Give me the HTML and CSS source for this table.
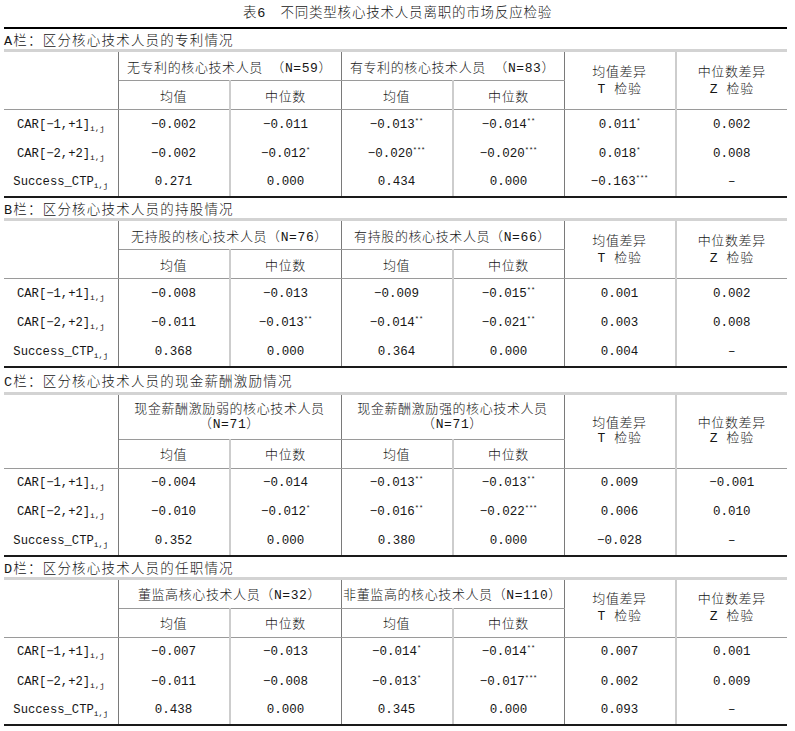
FILE: index.html
```html
<!DOCTYPE html>
<html lang="zh-CN">
<head>
<meta charset="utf-8">
<title>表6 不同类型核心技术人员离职的市场反应检验</title>
<link rel="stylesheet" href="styles.css">
</head>
<body>
<div class="title">表6　不同类型核心技术人员离职的市场反应检验</div>
<table class="tbl">
  <colgroup>
    <col class="c-label"><col class="c-num"><col class="c-num"><col class="c-num"><col class="c-num"><col class="c-num"><col class="c-num">
  </colgroup>

  <tbody class="sec">
    <tr class="cap"><td colspan="7">A栏：区分核心技术人员的专利情况</td></tr>
    <tr class="h1">
      <td rowspan="2" class="vd hb"></td>
      <td colspan="2" class="vd hb">无专利的核心技术人员 （N=59）</td>
      <td colspan="2" class="vd hb">有专利的核心技术人员 （N=83）</td>
      <td rowspan="2" class="vl hb two">均值差异<br>T 检验</td>
      <td rowspan="2" class="hb two">中位数差异<br>Z 检验</td>
    </tr>
    <tr class="h2">
      <td class="vl hb">均值</td><td class="vd hb">中位数</td><td class="vl hb">均值</td><td class="vd hb">中位数</td>
    </tr>
    <tr class="row">
      <td class="vd lab">CAR[−1,+1]<sub>i,j</sub></td>
      <td class="vl">−0.002</td><td class="vd">−0.011</td><td class="vl">−0.013<sup>**</sup></td><td class="vd">−0.014<sup>**</sup></td><td class="vl">0.011<sup>*</sup></td><td>0.002</td>
    </tr>
    <tr class="row">
      <td class="vd lab">CAR[−2,+2]<sub>i,j</sub></td>
      <td class="vl">−0.002</td><td class="vd">−0.012<sup>*</sup></td><td class="vl">−0.020<sup>***</sup></td><td class="vd">−0.020<sup>***</sup></td><td class="vl">0.018<sup>*</sup></td><td>0.008</td>
    </tr>
    <tr class="row last">
      <td class="vd lab">Success_CTP<sub>i,j</sub></td>
      <td class="vl">0.271</td><td class="vd">0.000</td><td class="vl">0.434</td><td class="vd">0.000</td><td class="vl">−0.163<sup>***</sup></td><td>–</td>
    </tr>
  </tbody>

  <tbody class="sec">
    <tr class="cap"><td colspan="7">B栏：区分核心技术人员的持股情况</td></tr>
    <tr class="h1">
      <td rowspan="2" class="vd hb"></td>
      <td colspan="2" class="vd hb">无持股的核心技术人员（N=76）</td>
      <td colspan="2" class="vd hb">有持股的核心技术人员（N=66）</td>
      <td rowspan="2" class="vl hb two">均值差异<br>T 检验</td>
      <td rowspan="2" class="hb two">中位数差异<br>Z 检验</td>
    </tr>
    <tr class="h2">
      <td class="vl hb">均值</td><td class="vd hb">中位数</td><td class="vl hb">均值</td><td class="vd hb">中位数</td>
    </tr>
    <tr class="row">
      <td class="vd lab">CAR[−1,+1]<sub>i,j</sub></td>
      <td class="vl">−0.008</td><td class="vd">−0.013</td><td class="vl">−0.009</td><td class="vd">−0.015<sup>**</sup></td><td class="vl">0.001</td><td>0.002</td>
    </tr>
    <tr class="row">
      <td class="vd lab">CAR[−2,+2]<sub>i,j</sub></td>
      <td class="vl">−0.011</td><td class="vd">−0.013<sup>**</sup></td><td class="vl">−0.014<sup>**</sup></td><td class="vd">−0.021<sup>**</sup></td><td class="vl">0.003</td><td>0.008</td>
    </tr>
    <tr class="row last">
      <td class="vd lab">Success_CTP<sub>i,j</sub></td>
      <td class="vl">0.368</td><td class="vd">0.000</td><td class="vl">0.364</td><td class="vd">0.000</td><td class="vl">0.004</td><td>–</td>
    </tr>
  </tbody>

  <tbody class="sec">
    <tr class="cap cap-tall"><td colspan="7">C栏：区分核心技术人员的现金薪酬激励情况</td></tr>
    <tr class="h1 tall">
      <td rowspan="2" class="vd hb"></td>
      <td colspan="2" class="vd hb two">现金薪酬激励弱的核心技术人员<br>（N=71）</td>
      <td colspan="2" class="vd hb two">现金薪酬激励强的核心技术人员<br>（N=71）</td>
      <td rowspan="2" class="vl hb two">均值差异<br>T 检验</td>
      <td rowspan="2" class="hb two">中位数差异<br>Z 检验</td>
    </tr>
    <tr class="h2">
      <td class="vl hb">均值</td><td class="vd hb">中位数</td><td class="vl hb">均值</td><td class="vd hb">中位数</td>
    </tr>
    <tr class="row">
      <td class="vd lab">CAR[−1,+1]<sub>i,j</sub></td>
      <td class="vl">−0.004</td><td class="vd">−0.014</td><td class="vl">−0.013<sup>**</sup></td><td class="vd">−0.013<sup>**</sup></td><td class="vl">0.009</td><td>−0.001</td>
    </tr>
    <tr class="row">
      <td class="vd lab">CAR[−2,+2]<sub>i,j</sub></td>
      <td class="vl">−0.010</td><td class="vd">−0.012<sup>*</sup></td><td class="vl">−0.016<sup>**</sup></td><td class="vd">−0.022<sup>***</sup></td><td class="vl">0.006</td><td>0.010</td>
    </tr>
    <tr class="row last">
      <td class="vd lab">Success_CTP<sub>i,j</sub></td>
      <td class="vl">0.352</td><td class="vd">0.000</td><td class="vl">0.380</td><td class="vd">0.000</td><td class="vl">−0.028</td><td>–</td>
    </tr>
  </tbody>

  <tbody class="sec">
    <tr class="cap"><td colspan="7">D栏：区分核心技术人员的任职情况</td></tr>
    <tr class="h1">
      <td rowspan="2" class="vd hb"></td>
      <td colspan="2" class="vd hb">董监高核心技术人员（N=32）</td>
      <td colspan="2" class="vd hb">非董监高的核心技术人员（N=110）</td>
      <td rowspan="2" class="vl hb two">均值差异<br>T 检验</td>
      <td rowspan="2" class="hb two">中位数差异<br>Z 检验</td>
    </tr>
    <tr class="h2">
      <td class="vl hb">均值</td><td class="vd hb">中位数</td><td class="vl hb">均值</td><td class="vd hb">中位数</td>
    </tr>
    <tr class="row">
      <td class="vd lab">CAR[−1,+1]<sub>i,j</sub></td>
      <td class="vl">−0.007</td><td class="vd">−0.013</td><td class="vl">−0.014<sup>*</sup></td><td class="vd">−0.014<sup>**</sup></td><td class="vl">0.007</td><td>0.001</td>
    </tr>
    <tr class="row">
      <td class="vd lab">CAR[−2,+2]<sub>i,j</sub></td>
      <td class="vl">−0.011</td><td class="vd">−0.008</td><td class="vl">−0.013<sup>*</sup></td><td class="vd">−0.017<sup>***</sup></td><td class="vl">0.002</td><td>0.009</td>
    </tr>
    <tr class="row last">
      <td class="vd lab">Success_CTP<sub>i,j</sub></td>
      <td class="vl">0.438</td><td class="vd">0.000</td><td class="vl">0.345</td><td class="vd">0.000</td><td class="vl">0.093</td><td>–</td>
    </tr>
  </tbody>
</table>
</body>
</html>
```

FILE: styles.css
```css
html, body {
  margin: 0;
  padding: 0;
  background: #ffffff;
}
body {
  color: #161616;
  font-family: "Liberation Mono", "Noto Sans CJK SC", monospace;
  font-size: 12.5px;
  font-weight: 300;
}
.title {
  height: 27px;
  line-height: 27px;
  text-align: center;
  font-size: 13.5px;
  letter-spacing: 0.8px;
}
.tbl {
  margin-left: 4px;
  width: 783px;
  border-collapse: collapse;
  table-layout: fixed;
  border-top: 2px solid #000;
}
.c-label { width: 114px; }
.c-num { width: 111.5px; }
.tbl td {
  padding: 0;
  text-align: center;
  vertical-align: middle;
  white-space: nowrap;
  overflow: visible;
}
.cap td {
  height: 20px;
  text-align: left;
  font-size: 13.5px;
  letter-spacing: 1.2px;
  border-bottom: 3px solid #d3d3d3;
}
.cap.cap-tall td { height: 24px; }
.h1 td, .h2 td {
  font-size: 13px;
  letter-spacing: 0.6px;
}
.h1 { height: 30px; }
.h1.tall { height: 46px; }
.h2 { height: 29px; }
.two { line-height: 17px; }
.h1.tall .two { line-height: 15px; }
.hb { border-bottom: 1px solid #9a9a9a; }
.row { height: 29.6px; }
.row.last { height: 28.6px; }
.row.last td { border-bottom: 2px solid #1a1a1a; }
.vd { border-right: 1px solid #7a7a7a; }
.vl { border-right: 2px solid #cdcdcd; }
.lab { font-size: 12.2px; }
sub {
  font-size: 8px;
  vertical-align: -3px;
  line-height: 0;
}
sup {
  font-size: 7px;
  vertical-align: 5px;
  line-height: 0;
}
```
